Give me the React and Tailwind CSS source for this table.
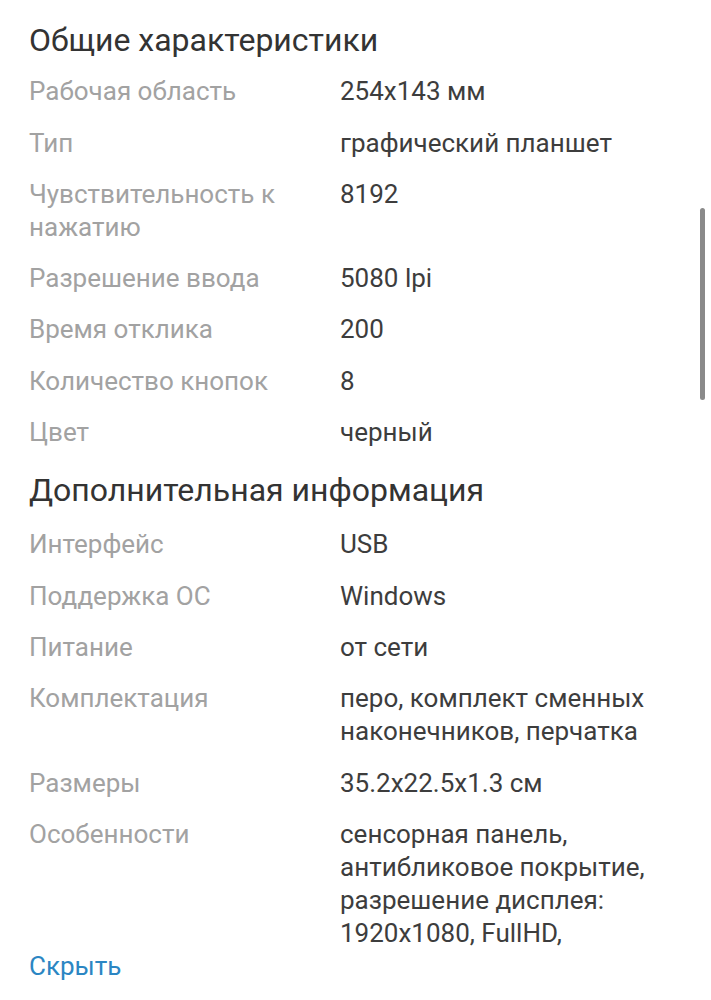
import React from 'react';

const general = [
  ['Рабочая область', '254x143 мм'],
  ['Тип', 'графический планшет'],
  [['Чувствительность к', 'нажатию'], '8192'],
  ['Разрешение ввода', '5080 lpi'],
  ['Время отклика', '200'],
  ['Количество кнопок', '8'],
  ['Цвет', 'черный'],
];

const extra = [
  ['Интерфейс', 'USB'],
  ['Поддержка ОС', 'Windows'],
  ['Питание', 'от сети'],
  ['Комплектация', ['перо, комплект сменных', 'наконечников, перчатка']],
  ['Размеры', '35.2x22.5x1.3 см'],
  [
    'Особенности',
    ['сенсорная панель,', 'антибликовое покрытие,', 'разрешение дисплея:', '1920x1080, FullHD,'],
  ],
];

const Lines = ({ text }) =>
  Array.isArray(text) ? text.map((t, i) => <div key={i}>{t}</div>) : <div>{text}</div>;

const Row = ({ label, value }) => (
  <div className="grid grid-cols-[311px_1fr] pt-[18.3px] text-[26px] leading-[33px]">
    <div className="text-[#a2a2a2]">
      <Lines text={label} />
    </div>
    <div className="text-[#3d3d3d]">
      <Lines text={value} />
    </div>
  </div>
);

const App = () => {
  return (
    <div
      className="relative min-h-[1000px] bg-white pl-[29px] pr-6 pt-[23px]"
      style={{ fontFamily: 'Roboto, "Noto Sans", sans-serif' }}
    >
      <h2 className="text-[32px] leading-[34px] text-[#333333]">Общие характеристики</h2>
      {general.map(([l, v], i) => (
        <Row key={i} label={l} value={v} />
      ))}

      <h2 className="mb-[3px] mt-[24px] text-[32px] leading-[34px] text-[#333333]">
        Дополнительная информация
      </h2>
      {extra.map(([l, v], i) => (
        <Row key={i} label={l} value={v} />
      ))}

      <button className="block text-[26px] leading-[32px] text-[#2b86c3]">Скрыть</button>

      {/* scroll indicator */}
      <div className="absolute right-[6px] top-[208px] h-[192px] w-[5px] rounded-full bg-[#8a8a8a]" />
    </div>
  );
};

export default App;
